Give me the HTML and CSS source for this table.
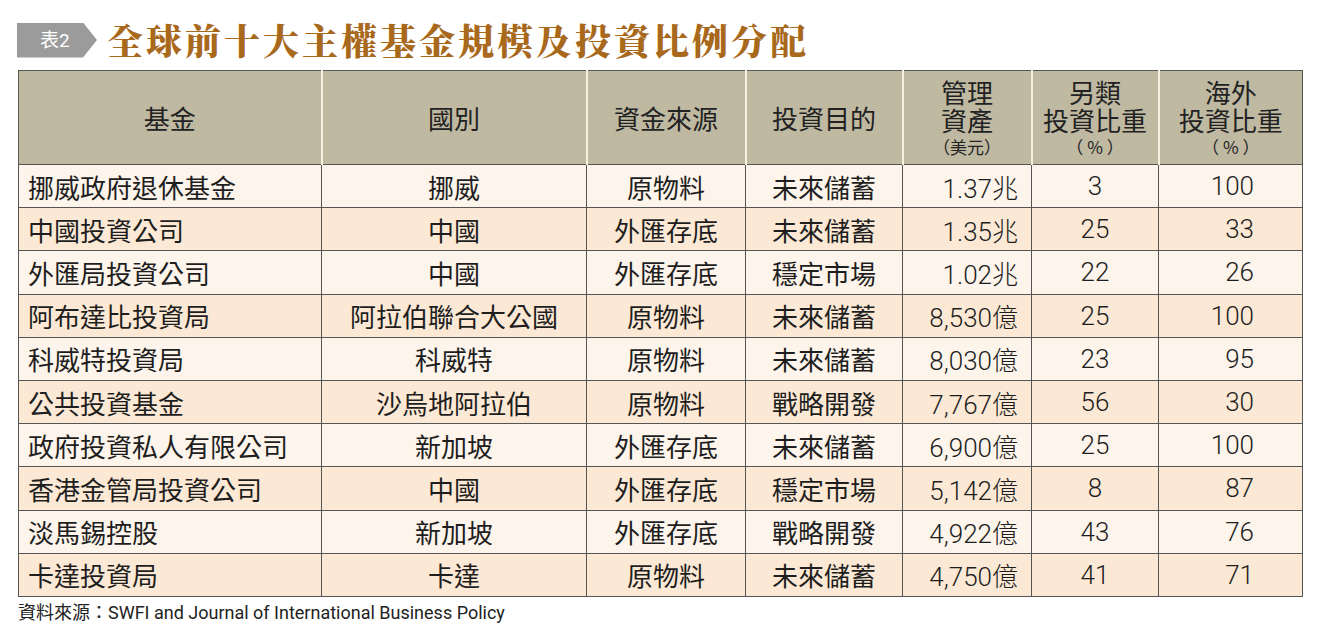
FILE: index.html
```html
<!DOCTYPE html>
<html lang="zh-Hant">
<head>
<meta charset="utf-8">
<link rel="stylesheet" href="styles.css">
</head>
<body>
<div class="page">
  <div class="heading">
    <div class="badge">表2</div>
    <h1 class="title">全球前十大主權基金規模及投資比例分配</h1>
  </div>
  <table class="tbl">
    <colgroup>
      <col class="c1"><col class="c2"><col class="c3"><col class="c4"><col class="c5"><col class="c6"><col class="c7">
    </colgroup>
    <thead>
      <tr>
        <th>基金</th>
        <th>國別</th>
        <th>資金來源</th>
        <th>投資目的</th>
        <th class="multi"><span class="ln">管理</span><span class="ln">資產</span><span class="unit">（美元）</span></th>
        <th class="multi"><span class="ln">另類</span><span class="ln">投資比重</span><span class="unit">（ % ）</span></th>
        <th class="multi"><span class="ln">海外</span><span class="ln">投資比重</span><span class="unit">（ % ）</span></th>
      </tr>
    </thead>
    <tbody>
      <tr><td class="name">挪威政府退休基金</td><td>挪威</td><td>原物料</td><td>未來儲蓄</td><td class="num">1.37兆</td><td class="mid">3</td><td class="right">100</td></tr>
      <tr><td class="name">中國投資公司</td><td>中國</td><td>外匯存底</td><td>未來儲蓄</td><td class="num">1.35兆</td><td class="mid">25</td><td class="right">33</td></tr>
      <tr><td class="name">外匯局投資公司</td><td>中國</td><td>外匯存底</td><td>穩定市場</td><td class="num">1.02兆</td><td class="mid">22</td><td class="right">26</td></tr>
      <tr><td class="name">阿布達比投資局</td><td>阿拉伯聯合大公國</td><td>原物料</td><td>未來儲蓄</td><td class="num">8,530億</td><td class="mid">25</td><td class="right">100</td></tr>
      <tr><td class="name">科威特投資局</td><td>科威特</td><td>原物料</td><td>未來儲蓄</td><td class="num">8,030億</td><td class="mid">23</td><td class="right">95</td></tr>
      <tr><td class="name">公共投資基金</td><td>沙烏地阿拉伯</td><td>原物料</td><td>戰略開發</td><td class="num">7,767億</td><td class="mid">56</td><td class="right">30</td></tr>
      <tr><td class="name">政府投資私人有限公司</td><td>新加坡</td><td>外匯存底</td><td>未來儲蓄</td><td class="num">6,900億</td><td class="mid">25</td><td class="right">100</td></tr>
      <tr><td class="name">香港金管局投資公司</td><td>中國</td><td>外匯存底</td><td>穩定市場</td><td class="num">5,142億</td><td class="mid">8</td><td class="right">87</td></tr>
      <tr><td class="name">淡馬錫控股</td><td>新加坡</td><td>外匯存底</td><td>戰略開發</td><td class="num">4,922億</td><td class="mid">43</td><td class="right">76</td></tr>
      <tr><td class="name">卡達投資局</td><td>卡達</td><td>原物料</td><td>未來儲蓄</td><td class="num">4,750億</td><td class="mid">41</td><td class="right">71</td></tr>
    </tbody>
  </table>
  <p class="source">資料來源：SWFI and Journal of International Business Policy</p>
</div>
</body>
</html>
```

FILE: styles.css
```css
html, body {
  margin: 0;
  padding: 0;
  background: #ffffff;
}
.page {
  padding: 17px 16px 0 18px;
  font-family: "Roboto", "Noto Sans CJK TC", sans-serif;
  color: #1e1e1e;
}
.heading {
  display: flex;
  align-items: center;
  height: 46px;
  margin-left: -1px;
}
.badge {
  width: 80px;
  height: 35px;
  background: #9b9b9b;
  color: #ffffff;
  font-family: "Roboto", "Noto Sans CJK TC", sans-serif;
  font-size: 19px;
  line-height: 35px;
  padding-left: 23px;
  box-sizing: border-box;
  clip-path: polygon(0 0, 66px 0, 80px 50%, 66px 100%, 0 100%);
}
.title {
  margin: 0 0 0 10px;
  font-family: "Noto Serif CJK TC", "Noto Serif CJK JP", "Noto Sans CJK TC", serif;
  font-weight: 900;
  font-size: 36px;
  letter-spacing: 3px;
  color: #a8691c;
  line-height: 46px;
}
.tbl {
  margin-top: 7px;
  border-collapse: collapse;
  width: 1284px;
  table-layout: fixed;
  border: 1.5px solid #555555;
}
.c1 { width: 303px; }
.c2 { width: 265px; }
.c3 { width: 159px; }
.c4 { width: 157px; }
.c5 { width: 129px; }
.c6 { width: 127px; }
.c7 { width: 144px; }
.tbl th {
  background: #bfb9a2;
  height: 93px;
  font-weight: normal;
  font-size: 26px;
  line-height: 28px;
  font-family: "Noto Sans CJK TC", sans-serif;
  border-left: 2px solid #f4efdf;
  border-bottom: 1.5px solid #555555;
  padding: 0;
  text-align: center;
  vertical-align: middle;
  color: #222;
}
.tbl th:first-child { border-left: none; }
.tbl th .ln {
  display: block;
  line-height: 28px;
}
.tbl th .unit {
  display: block;
  font-size: 17px;
  line-height: 22px;
  margin-top: 2px;
}
.tbl td {
  height: 42.2px;
  padding: 0;
  font-size: 26px;
  border: 1px solid #555555;
  text-align: center;
  vertical-align: middle;
  white-space: nowrap;
  font-family: "Noto Sans CJK TC", sans-serif;
}
.tbl td.num,
.tbl td.mid,
.tbl td.right {
  font-family: "Roboto", "Noto Sans CJK TC", sans-serif;
  font-weight: 300;
}
.tbl tbody tr:nth-child(odd) td { background: #fdf4eb; }
.tbl tbody tr:nth-child(even) td { background: #fce9d5; }
.tbl td.name {
  text-align: left;
  padding-left: 9px;
}
.tbl td.num {
  text-align: right;
  padding-right: 13px;
}
.tbl td.right {
  text-align: right;
  padding-right: 48px;
}
.source {
  margin: 4px 0 0 0;
  font-size: 18px;
  line-height: 24px;
  color: #222;
  font-family: "Roboto", "Noto Sans CJK TC", sans-serif;
}
```
